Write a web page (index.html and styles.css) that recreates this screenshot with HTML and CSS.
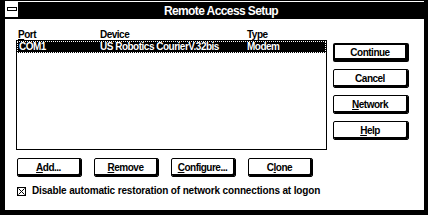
FILE: index.html
```html
<!DOCTYPE html>
<html>
<head>
<meta charset="utf-8">
<link rel="stylesheet" href="styles.css">
</head>
<body>
<div class="window">
  <div class="titlebar">
    <div class="sysmenu"><span class="sysbar"></span></div>
    <div class="title">Remote Access Setup</div>
  </div>
  <div class="client">
    <div class="top">
      <div class="listcol">
        <div class="headers">
          <span><u>P</u>ort</span><span>Device</span><span>Type</span>
        </div>
        <div class="list">
          <div class="row selected">
            <span>COM1</span><span>US Robotics CourierV.32bis</span><span>Modem</span>
          </div>
        </div>
      </div>
      <div class="btncol">
        <button class="btn default">Continue</button>
        <button class="btn">Cancel</button>
        <button class="btn"><u>N</u>etwork</button>
        <button class="btn"><u>H</u>elp</button>
      </div>
    </div>
    <div class="bottom">
      <button class="btn wide"><u>A</u>dd...</button>
      <button class="btn wide"><u>R</u>emove</button>
      <button class="btn wide"><u>C</u>onfigure...</button>
      <button class="btn wide">C<u>l</u>one</button>
    </div>
    <div class="check">
      <svg class="box" width="9" height="9" viewBox="0 0 9 9"><rect x="0.5" y="0.5" width="8" height="8" fill="#fff" stroke="#000"/><path d="M1.5 1.5 L7.5 7.5 M7.5 1.5 L1.5 7.5" stroke="#000" stroke-width="1"/></svg>
      <span class="label">Disable automatic restoration of network connections at logon</span>
    </div>
  </div>
</div>
</body>
</html>
```
FILE: styles.css
```css
html, body {
  margin: 0;
  padding: 0;
  background: #000;
  width: 428px;
  height: 215px;
  overflow: hidden;
}
.window {
  display: flex;
  flex-direction: column;
  height: 215px;
  padding: 0 4px 5px 5px;
  box-sizing: border-box;
  font-family: "Liberation Sans", Arial, sans-serif;
}
.titlebar {
  display: flex;
  height: 19px;
}
.sysmenu {
  width: 13px;
  height: 16px;
  margin-top: 1px;
  background: #fff;
  display: flex;
  align-items: center;
  justify-content: center;
}
.sysbar {
  width: 8px;
  height: 2px;
  border: 1px solid #000;
  background: #fff;
}
.title {
  flex: 1;
  margin-top: 1px;
  border-top: 1px solid #fff;
  background: #000;
  color: #fff;
  text-align: center;
  font-weight: bold;
  font-size: 12px;
  letter-spacing: -0.6px;
  line-height: 15px;
  padding-top: 2px;
  height: 15px;
}
.client {
  flex: 1;
  background: #fff;
  padding: 10px 0 0 11px;
  color: #000;
  font-weight: bold;
  font-size: 10px;
  letter-spacing: -0.5px;
}
.top {
  display: flex;
}
.listcol {
  width: 311px;
}
.headers {
  display: grid;
  grid-template-columns: 82px 147px 1fr;
  padding-left: 2px;
  height: 11px;
  line-height: 11px;
}
.list {
  height: 110px;
  border: 1px solid #000;
  box-sizing: border-box;
}
.row {
  display: grid;
  grid-template-columns: 81px 147px 1fr;
  padding-left: 2px;
  height: 12px;
  line-height: 12px;
}
.selected {
  background: #000;
  color: #fff;
  outline: 1px dotted #fff;
  outline-offset: -1px;
}
.btncol {
  display: flex;
  flex-direction: column;
  gap: 7px;
  margin-left: 6px;
  padding-top: 14px;
}
.btn {
  width: 76px;
  height: 19px;
  box-sizing: border-box;
  border: 1px solid #000;
  border-radius: 2px;
  background: #fff;
  box-shadow: inset -2px -2px 0 #000;
  font-family: "Liberation Sans", Arial, sans-serif;
  font-weight: bold;
  font-size: 10px;
  letter-spacing: -0.5px;
  color: #000;
  padding: 1px 2px 0 0;
  line-height: 12px;
}
.default {
  border-width: 2px;
}
.bottom {
  display: flex;
  justify-content: space-between;
  width: 296px;
  margin-top: 8px;
  margin-left: 1px;
}
.wide {
  width: 65px;
}
.check {
  display: flex;
  align-items: center;
  gap: 6px;
  margin-top: 8px;
  margin-left: 1px;
  height: 12px;
  line-height: 12px;
}
.label {
  letter-spacing: -0.15px;
}
.box {
  display: block;
  flex: none;
}
```
